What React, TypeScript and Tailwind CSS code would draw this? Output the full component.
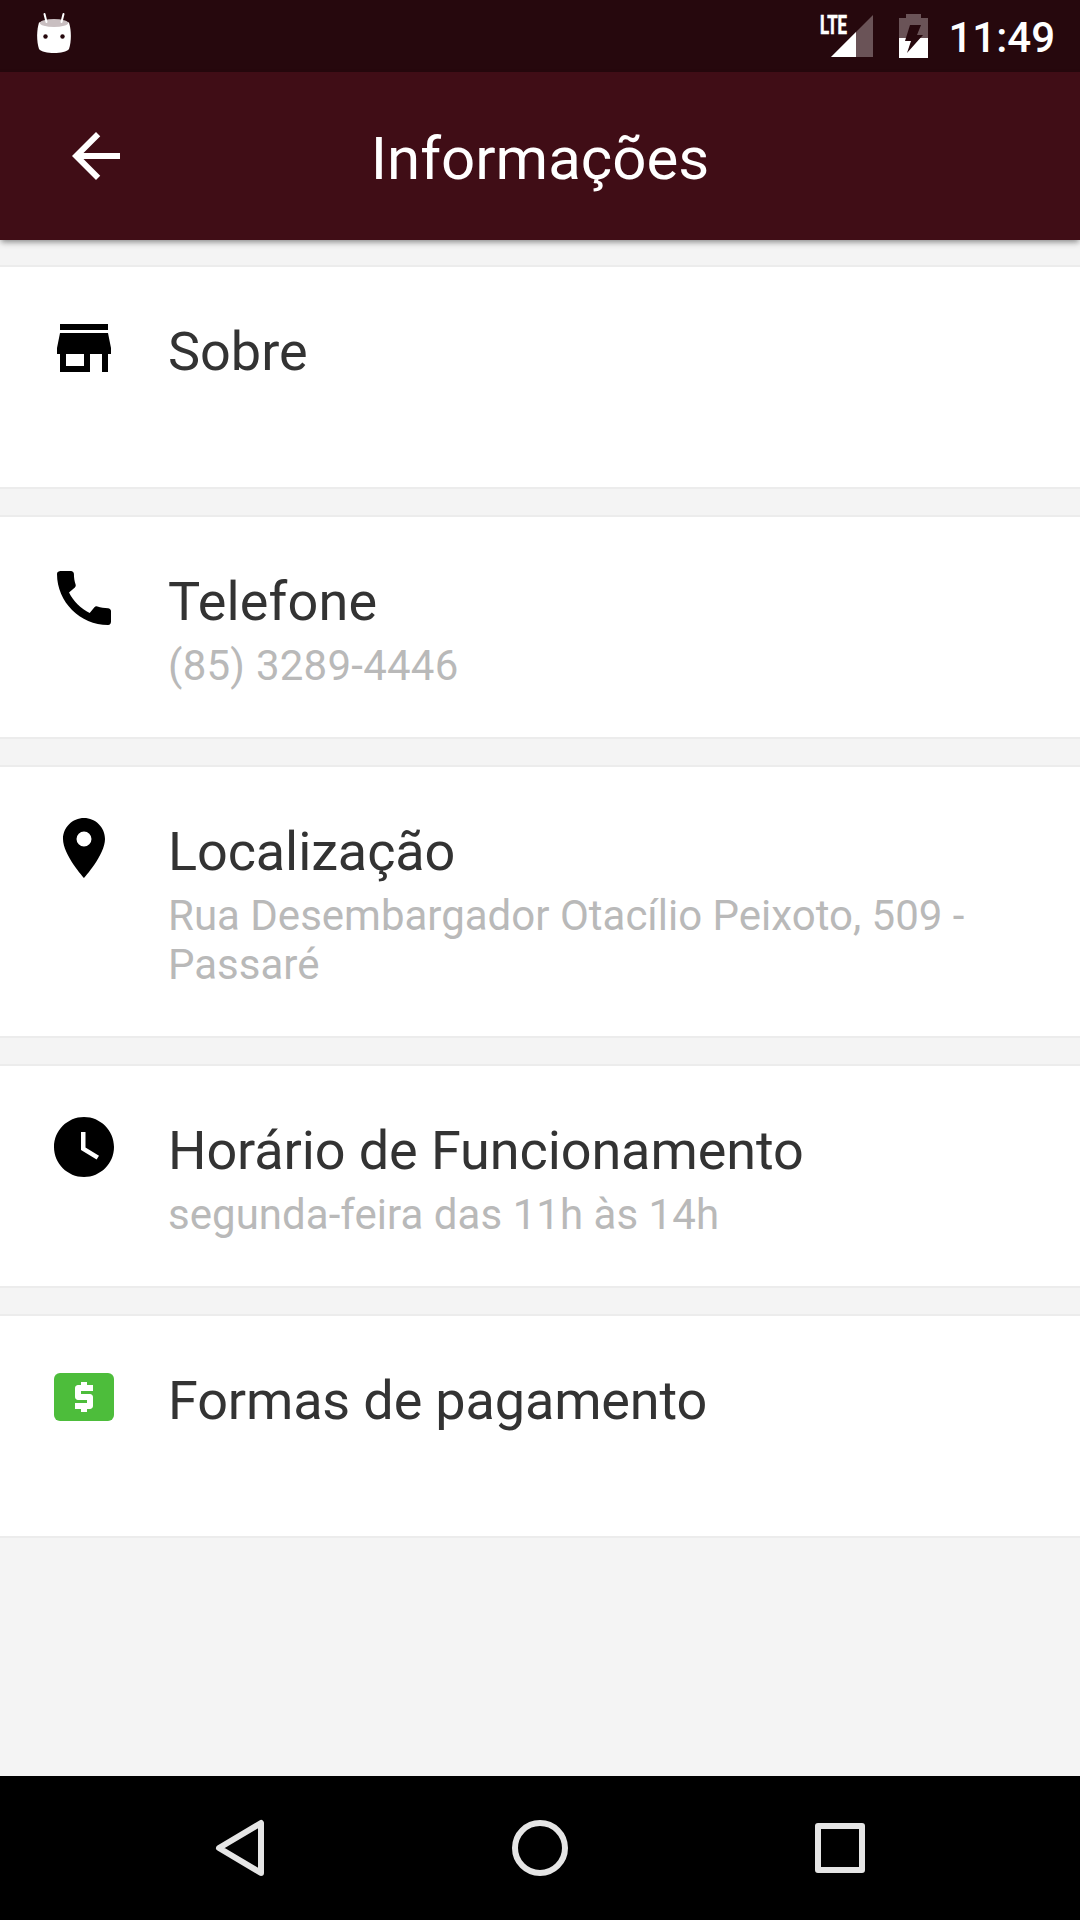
import React from 'react';
import { MdArrowBack, MdCall, MdPlace, MdStore, MdWatchLater } from 'react-icons/md';

function CashIcon() {
  return (
    <svg width="72" height="72" viewBox="0 0 24 24" className="text-[#4dbd3b]">
      <rect x="2" y="4" width="20" height="16" rx="2" fill="currentColor" />
      <path d="M11 17h2v-1h1c.55 0 1-.45 1-1v-3c0-.55-.45-1-1-1h-3v-1h4V8h-2V7h-2v1h-1c-.55 0-1 .45-1 1v3c0 .55.45 1 1 1h3v1H9v2h2v1z" fill="#fff" />
    </svg>
  );
}

const items = [
  { icon: <MdStore size={72} />, title: 'Sobre', text: '', titleClass: '', textClass: '' },
  { icon: <MdCall size={72} />, title: 'Telefone', text: '(85) 3289-4446', titleClass: 'tracking-[0.15px]', textClass: 'tracking-[0.25px]' },
  { icon: <MdPlace size={72} />, title: 'Localização', text: 'Rua Desembargador Otacílio Peixoto, 509 - Passaré', titleClass: 'tracking-[-0.1px]', textClass: '' },
  { icon: <MdWatchLater size={72} />, title: 'Horário de Funcionamento', text: 'segunda-feira das 11h às 14h', titleClass: 'tracking-[-0.1px]', textClass: 'tracking-[0.04px]' },
  { icon: <CashIcon />, title: 'Formas de pagamento', text: '', titleClass: 'tracking-[-0.15px]', textClass: '' },
];

function StatusBar() {
  return (
    <div className="h-[72px] shrink-0 bg-[#26080d] flex items-center justify-between pl-9 pr-[25px] text-white">
      <svg width="36" height="44" viewBox="0 0 36 44" className="mb-[5px]">
        <path d="M3 10.5C8 8 28 8 33 10.5C35.5 19 35.5 29 33 37C29 42.3 7 42.3 3 37C.5 29 .5 19 3 10.5Z" fill="#fff" />
        <ellipse cx="18" cy="11" rx="14.2" ry="4" fill="#c9bfc1" />
        <path d="M8.5 2L10.5 10M27.5 2L25.5 10" stroke="#fff" strokeWidth="2" strokeLinecap="round" />
        <circle cx="9.5" cy="24.5" r="2.2" fill="#26080d" />
        <circle cx="26.5" cy="24.5" r="2.2" fill="#26080d" />
      </svg>

      <div className="flex items-center">
        <svg width="60" height="60" viewBox="-3 -8 60 60" className="mr-[22px]">
          <path d="M53 1V43H11Z" fill="#6a5357" />
          <path d="M36 18V43H11Z" fill="#fff" />
          <text x="0" y="20" textLength="27" lengthAdjust="spacingAndGlyphs" fill="#fff" stroke="#fff" strokeWidth="0.7" className="text-[26px] font-bold">LTE</text>
        </svg>
        <svg width="29" height="44" viewBox="0 0 29 44" className="mr-5">
          <path d="M7 0H22V4H29V44H0V4H7Z" fill="#6a5357" />
          <path d="M0 24H29V44H0Z" fill="#fff" />
          <path d="M11 11H22L18 21H24L8 39L12 27H6Z" fill="#26080d" />
        </svg>
        <span className="mt-0.5 text-[42px] leading-[49px] font-medium">11:49</span>
      </div>
    </div>
  );
}

function Header() {
  return (
    <header className="h-[168px] shrink-0 bg-[#400d16] text-white grid grid-cols-[132px_1fr_132px] items-center shadow-[0_3px_6px_-1px_rgba(0,0,0,0.45)]">
      <button className="pl-[60px]">
        <MdArrowBack size={72} />
      </button>
      <h1 className="text-center text-[60px] leading-[70px] mt-1.5">Informações</h1>
    </header>
  );
}

function NavigationBar() {
  return (
    <nav className="h-36 shrink-0 bg-black flex items-center justify-center gap-[228px]">
      <svg width="72" height="72" viewBox="0 0 72 72" fill="none" stroke="#e5e5e5" strokeWidth="6" strokeLinejoin="round">
        <path d="M57 11V61L15 36Z" />
      </svg>
      <svg width="72" height="72" viewBox="0 0 72 72" fill="none" stroke="#e5e5e5" strokeWidth="6">
        <circle cx="36" cy="36" r="25" />
      </svg>
      <svg width="72" height="72" viewBox="0 0 72 72" fill="none" stroke="#e5e5e5" strokeWidth="6" strokeLinejoin="round">
        <rect x="14" y="14" width="44" height="44" />
      </svg>
    </nav>
  );
}

export default function App() {
  return (
    <div className="h-[1920px] w-[1080px] flex flex-col bg-[#f4f4f4] font-[Roboto,'Noto_Sans',sans-serif]">
      <StatusBar />
      <Header />
      <main className="flex-1 flex flex-col gap-[26px] pt-[25px]">
        {items.map((item) => (
          <section key={item.title} className="flex bg-white border-y-2 border-[#ececec] px-12 pb-[47px]">
            <div className="w-[120px] shrink-0 pt-[45px] text-black">{item.icon}</div>
            <div className="flex-1 pt-[53px]">
              <h2 className={`text-[54px] leading-[64px] text-[#333] ${item.titleClass}`}>{item.title}</h2>
              <p className={`mt-[7px] min-h-[49px] text-[42px] leading-[49px] text-[#b9b9b9] ${item.textClass}`}>{item.text}</p>
            </div>
          </section>
        ))}
      </main>
      <NavigationBar />
    </div>
  );
}
